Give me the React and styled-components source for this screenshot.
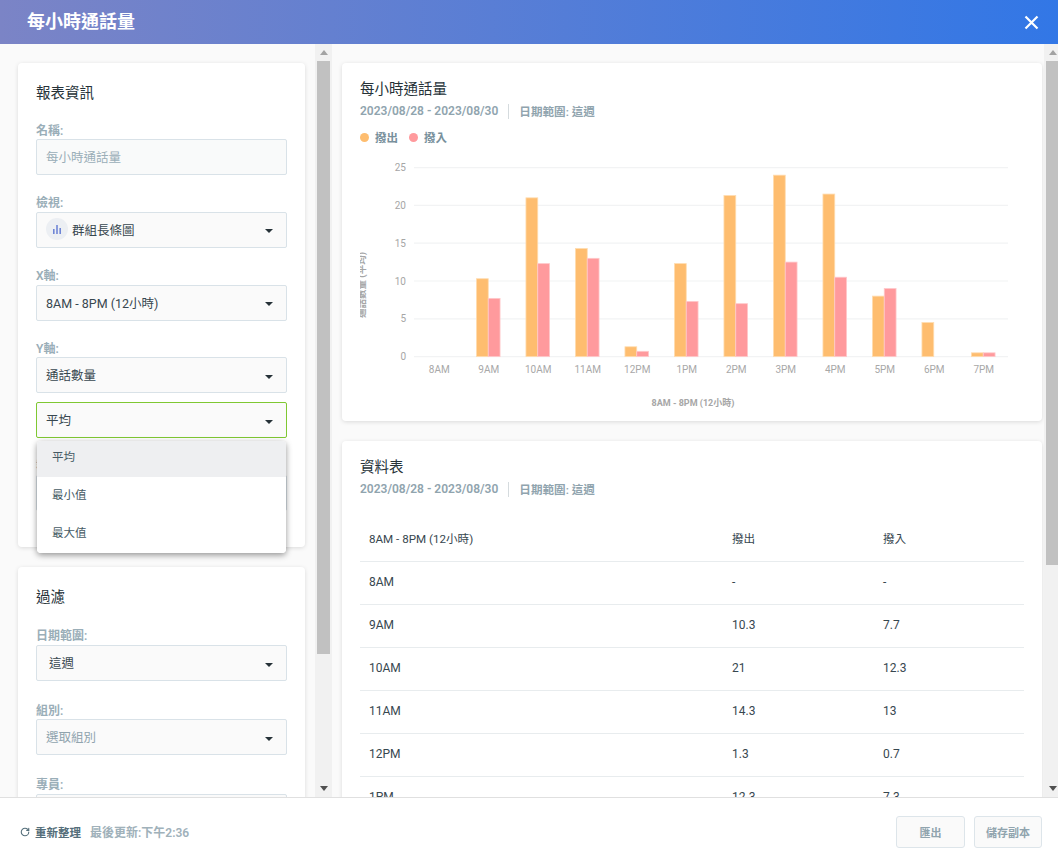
import React from "react";
import styled, { createGlobalStyle } from "styled-components";
import { RotateCw } from "lucide-react";

const FONT = `Roboto, "Noto Sans CJK TC", "Noto Sans", sans-serif`;

const Global = createGlobalStyle`
  html, body { margin: 0; height: 100%; overflow: hidden; }
  body { font-family: ${FONT}; background: #fafafa; }
  * { box-sizing: border-box; }
`;

const Page = styled.div`
  width: 100vw; height: 100vh; overflow: hidden;
  display: flex; flex-direction: column; background: #fafafa;
`;
const Header = styled.header`
  flex: 0 0 44px; display: flex; align-items: center; justify-content: space-between;
  padding: 0 19px 0 27px;
  background: linear-gradient(90deg, #7b84c6 0%, #3277e6 100%);
`;
const HeaderTitle = styled.h1`
  margin: 0; font-size: 18px; font-weight: 700; color: #fff; line-height: 1;
`;
const CloseIcon = styled.svg`
  width: 15px; height: 15px; display: block; stroke: #fff; stroke-width: 2.2; fill: none;
`;
const Main = styled.main`
  flex: 1 1 auto; min-height: 0; display: flex; width: 1061px;
`;
const Pane = styled.div`
  height: 100%; overflow: hidden; flex: 0 0 ${p => p.$width}px;
  padding: 19px 0 0 ${p => p.$left}px;
`;
const ScrollRail = styled.div`
  flex: 0 0 17px; height: 100%; display: flex; flex-direction: column; background: #f1f1f1;
`;
const ScrollArrow = styled.div`
  flex: 0 0 17px; display: flex; align-items: center; justify-content: center;
`;
const ArrowUp = styled.i`
  width: 0; height: 0; border-style: solid; border-width: 0 4px 5px; border-color: transparent transparent #a3a3a3;
`;
const ArrowDown = styled.i`
  width: 0; height: 0; border-style: solid; border-width: 5px 4px 0; border-color: #505050 transparent transparent;
`;
const ScrollTrack = styled.div`
  flex: 1 1 auto; padding: 0 2px;
`;
const ScrollThumb = styled.div`
  height: ${p => p.$height}px; background: #c1c1c1;
`;
const Card = styled.section`
  background: #fff; border-radius: 4px; box-shadow: 0 1px 4px rgba(0, 0, 0, 0.13);
`;
const SideCard = styled(Card)`
  width: 287px; padding: 21px 18px 36px; margin-bottom: 20px;
`;
const ReportCard = styled(Card)`
  width: 700px; padding: 17px 18px ${p => p.$bottom}px; margin-bottom: 20px;
`;
const CardTitle = styled.h2`
  margin: 0; font-size: 14.5px; line-height: 20px; font-weight: 400; color: #263238;
`;
const SideTitle = styled(CardTitle)`
  margin-bottom: ${p => p.$gap}px;
`;
const Field = styled.div`
  position: relative; margin-bottom: ${p => p.$gap ?? 20}px;
  &:last-child { margin-bottom: 0; }
`;
const Label = styled.label`
  display: block; height: 16.67px; font-size: 12px; line-height: 17px; font-weight: 600; color: #9aaeb8;
`;
const TextBox = styled.div`
  height: 36px; padding: 0 9px 2px; display: flex; align-items: center;
  background: #f9fafa; border: 1px solid #d9e2e8; border-radius: 2px;
  font-size: 12.5px; color: #9aaeb8;
`;
const SelectBox = styled.div`
  height: 36px; display: flex; align-items: center; justify-content: space-between;
  padding: 0 13px 1px ${p => p.$inset ?? 9}px;
  background: #fafafa; border: 1px solid ${p => (p.$focused ? "#7fc832" : "#d9e2e8")}; border-radius: 2px;
  font-size: 12.5px; color: ${p => (p.$muted ? "#90a4ae" : "#37474f")};
`;
const SelectValue = styled.span`
  display: flex; align-items: center; gap: 4px;
`;
const Caret = styled.i`
  width: 0; height: 0; margin-top: 4px; border-style: solid; border-width: 4px 4px 0;
  border-color: #263238 transparent transparent;
`;
const ChartBadge = styled.span`
  width: 22px; height: 22px; border-radius: 50%; background: #eceff3;
  display: flex; align-items: center; justify-content: center;
`;
const Menu = styled.ul`
  position: absolute; z-index: 5; top: calc(100% + 3px); left: 1px; right: 1px; margin: 0; padding: 0;
  list-style: none; background: #fff; border-radius: 4px; overflow: hidden;
  box-shadow: 0 2px 6px rgba(0, 0, 0, 0.42);
`;
const MenuItem = styled.li`
  height: ${p => (p.$active ? 36 : 38)}px; display: flex; align-items: center;
  padding: 0 0 ${p => (p.$active ? 6 : 4)}px 15px;
  font-size: 11.5px; color: #455a64; background: ${p => (p.$active ? "#eeeff1" : "#fff")};
`;
const MetaRow = styled.div`
  display: flex; align-items: center; height: 16px; margin-top: 3px;
  font-size: 12px; font-weight: 600; color: #90a4ae;
`;
const MetaDivider = styled.span`
  width: 1px; height: 15px; background: #d5dbde; margin: 0 10px 0 10px;
`;
const MetaRange = styled.span`
  font-size: 11.6px;
`;
const Legend = styled.div`
  display: flex; gap: 11px; height: 16px; margin-top: 10px;
`;
const LegendItem = styled.span`
  display: flex; align-items: center; gap: 6px; font-size: 11.5px; font-weight: 600; color: #78909c;
`;
const Dot = styled.i`
  width: 9px; height: 9px; border-radius: 50%; background: ${p => p.$color};
`;
const ChartSvg = styled.svg`
  display: block; width: 664px; height: 260px; margin-top: 5px; font-family: ${FONT};
`;
const Table = styled.table`
  width: 664px; margin-top: 18px; border-collapse: collapse; table-layout: fixed;
  font-size: 12px; color: #37474f;
`;
const HeadCell = styled.th`
  height: 46px; padding: 0 0 0 9px; text-align: left; font-weight: 400; font-size: 11.6px;
  width: ${p => p.$w}px; color: #37474f; border-bottom: 1px solid #e8ecee;
`;
const Cell = styled.td`
  height: 43px; padding: 0 0 1px 9px; border-bottom: 1px solid #e8ecee;
`;
const Footer = styled.footer`
  flex: 0 0 61px; display: flex; align-items: center; justify-content: space-between;
  padding: 7px 16px 0 20px; background: #fff; border-top: 1px solid #e0e0e0;
`;
const Status = styled.div`
  display: flex; align-items: center; font-size: 11.5px; font-weight: 600;
`;
const RefreshText = styled.span`
  color: #546e7a; margin: 0 9px 0 5px;
`;
const UpdatedText = styled.span`
  color: #a0b1ba; font-size: 12px;
`;
const Actions = styled.div`
  display: flex; gap: 9px;
`;
const Button = styled.button`
  height: 32px; width: ${p => p.$w}px; padding: 0; font: 600 11px ${FONT}; color: #90a4ae;
  background: #fafafa; border: 1px solid #dde5ea; border-radius: 3px;
`;

const ORANGE = "#febd6f";
const PINK = "#ff9a9d";
const data = [
  ["8AM", null, null],
  ["9AM", 10.3, 7.7],
  ["10AM", 21, 12.3],
  ["11AM", 14.3, 13],
  ["12PM", 1.3, 0.7],
  ["1PM", 12.3, 7.3],
  ["2PM", 21.3, 7],
  ["3PM", 24, 12.5],
  ["4PM", 21.5, 10.5],
  ["5PM", 8, 9],
  ["6PM", 4.5, null],
  ["7PM", 0.5, 0.5],
];
const X0 = 414, STEP = 49.5, Y0 = 356.6, UNIT = 7.56, BAR = 11.8;

function Bar({ x, value, fill, edge }) {
  if (!value) return null;
  const h = value * UNIT;
  return <rect x={x} y={Y0 - h} width={BAR} height={h} fill={fill} stroke={edge} strokeWidth="0.8" />;
}

function Chart() {
  return (
    <ChartSvg viewBox="360 150 664 260">
      {[0, 5, 10, 15, 20, 25].map(v => (
        <g key={v}>
          <line x1={X0} x2={1008} y1={Y0 - v * UNIT} y2={Y0 - v * UNIT} stroke="#f2f3f4" strokeWidth="1.2" />
          <text x="406" y={Y0 - v * UNIT + 3.5} textAnchor="end" fontSize="10" fill="#a6a6a6">{v}</text>
        </g>
      ))}
      {data.map(([name, a, b], i) => {
        const c = X0 + STEP * i + STEP / 2;
        return (
          <g key={name}>
            <Bar x={c - BAR} value={a} fill={ORANGE} edge="#ffdcb0" />
            <Bar x={c} value={b} fill={PINK} edge="#ffc8ca" />
            <text x={c + 0.5} y="373" textAnchor="middle" fontSize="10" fill="#a8a8a8">{name}</text>
          </g>
        );
      })}
      <text x="693" y="406" textAnchor="middle" fontSize="9" fontWeight="700" fill="#a6a6a6">8AM - 8PM (12小時)</text>
      <text x="0" y="0" transform="translate(365 285) rotate(-90)" textAnchor="middle" fontSize="9.5" fontWeight="700" fill="#a6a6a6">通話數量 (平均)</text>
    </ChartSvg>
  );
}

function Meta() {
  return (
    <MetaRow>
      2023/08/28 - 2023/08/30
      <MetaDivider />
      <MetaRange>日期範圍: 這週</MetaRange>
    </MetaRow>
  );
}

function Select({ children, ...rest }) {
  return (
    <SelectBox {...rest}>
      <SelectValue>{children}</SelectValue>
      <Caret />
    </SelectBox>
  );
}

function Scrollbar({ thumb }) {
  return (
    <ScrollRail>
      <ScrollArrow><ArrowUp /></ScrollArrow>
      <ScrollTrack><ScrollThumb $height={thumb} /></ScrollTrack>
      <ScrollArrow><ArrowDown /></ScrollArrow>
    </ScrollRail>
  );
}

export default function App() {
  return (
    <Page>
      <Global />
      <Header>
        <HeaderTitle>每小時通話量</HeaderTitle>
        <CloseIcon viewBox="0 0 15 15"><path d="M1.5 1.5l12 12M13.5 1.5l-12 12" /></CloseIcon>
      </Header>
      <Main>
        <Pane $width={315} $left={18}>
          <SideCard>
            <SideTitle $gap={18.6}>報表資訊</SideTitle>
            <Field>
              <Label>名稱:</Label>
              <TextBox>每小時通話量</TextBox>
            </Field>
            <Field>
              <Label>檢視:</Label>
              <Select>
                <ChartBadge>
                  <svg width="10" height="10" viewBox="0 0 10 10" fill="#6f86d6">
                    <rect x="1" y="5" width="1.6" height="5" />
                    <rect x="4.2" y="1" width="1.6" height="9" />
                    <rect x="7.4" y="4" width="1.6" height="6" />
                  </svg>
                </ChartBadge>
                群組長條圖
              </Select>
            </Field>
            <Field>
              <Label>X軸:</Label>
              <Select>8AM - 8PM (12小時)</Select>
            </Field>
            <Field $gap={9}>
              <Label>Y軸:</Label>
              <Select>通話數量</Select>
            </Field>
            <Field>
              <Select $focused>平均</Select>
              <Menu>
                <MenuItem $active>平均</MenuItem>
                <MenuItem>最小值</MenuItem>
                <MenuItem>最大值</MenuItem>
              </Menu>
            </Field>
            <Field>
              <Label>群組:</Label>
              <Select>撥出</Select>
            </Field>
          </SideCard>
          <SideCard>
            <SideTitle $gap={20.6}>過濾</SideTitle>
            <Field $gap={21.6}>
              <Label>日期範圍:</Label>
              <Select $inset={12}>這週</Select>
            </Field>
            <Field $gap={21.6}>
              <Label>組別:</Label>
              <Select $muted>選取組別</Select>
            </Field>
            <Field>
              <Label>專員:</Label>
              <Select $muted>選取專員</Select>
            </Field>
          </SideCard>
        </Pane>
        <Scrollbar thumb={593} />
        <Pane $width={712} $left={10}>
          <ReportCard $bottom={11}>
            <CardTitle>每小時通話量</CardTitle>
            <Meta />
            <Legend>
              <LegendItem><Dot $color={ORANGE} />撥出</LegendItem>
              <LegendItem><Dot $color={PINK} />撥入</LegendItem>
            </Legend>
            <Chart />
          </ReportCard>
          <ReportCard $bottom={18}>
            <CardTitle>資料表</CardTitle>
            <Meta />
            <Table>
              <thead>
                <tr>
                  <HeadCell $w={363}>8AM - 8PM (12小時)</HeadCell>
                  <HeadCell $w={151}>撥出</HeadCell>
                  <HeadCell $w={150}>撥入</HeadCell>
                </tr>
              </thead>
              <tbody>
                {data.map(([name, a, b]) => (
                  <tr key={name}>
                    <Cell>{name}</Cell>
                    <Cell>{a ?? "-"}</Cell>
                    <Cell>{b ?? "-"}</Cell>
                  </tr>
                ))}
              </tbody>
            </Table>
          </ReportCard>
        </Pane>
        <Scrollbar thumb={504} />
      </Main>
      <Footer>
        <Status>
          <RotateCw size={10} strokeWidth={2.6} color="#546e7a" />
          <RefreshText>重新整理</RefreshText>
          <UpdatedText>最後更新:下午2:36</UpdatedText>
        </Status>
        <Actions>
          <Button $w={69}>匯出</Button>
          <Button $w={68}>儲存副本</Button>
        </Actions>
      </Footer>
    </Page>
  );
}
